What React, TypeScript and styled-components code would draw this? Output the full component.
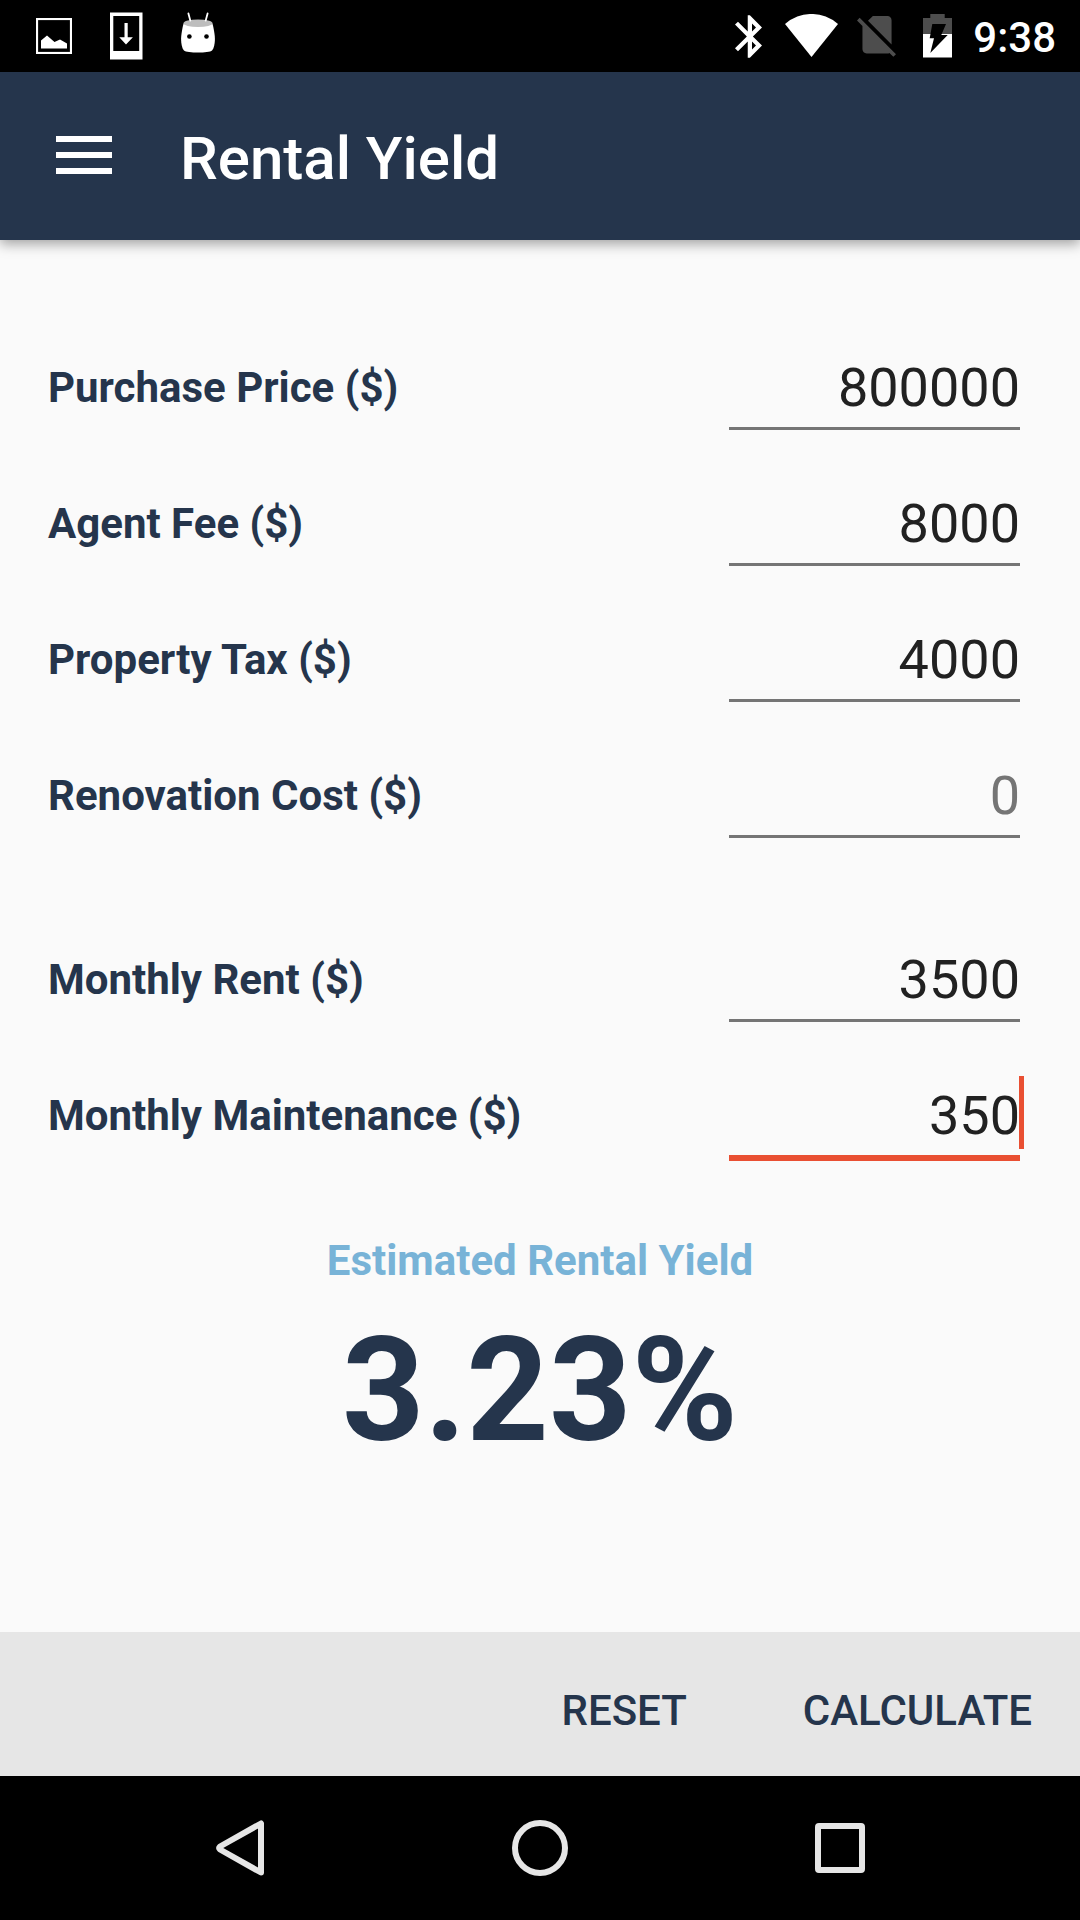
import React, { useState } from "react";
import styled, { createGlobalStyle } from "styled-components";

const navy = "#25354c";
const accent = "#e94f32";

const GlobalStyle = createGlobalStyle`
  *, *::before, *::after { box-sizing: border-box; }
  body {
    margin: 0;
    background: #fafafa;
    font-family: Roboto, "Noto Sans", sans-serif;
  }
  button, input { font-family: inherit; }
`;

const Screen = styled.div`
  display: flex;
  flex-direction: column;
  min-height: 100vh;
`;

const StatusBar = styled.div`
  display: flex;
  align-items: center;
  justify-content: space-between;
  height: 72px;
  padding: 0 24px 0 36px;
  background: #000;
  color: #fff;
`;

const Notifications = styled.div`
  display: flex;
  align-items: center;
  gap: 38px;
`;

const SystemStatus = styled.div`
  display: grid;
  grid-template-columns: repeat(4, 63px) auto;
  align-items: center;
  justify-items: center;
`;

const Clock = styled.time`
  padding: 4px 0 0 4px;
  font-size: 42px;
  font-weight: 500;
  line-height: 48px;
`;

const AppBar = styled.header`
  position: relative;
  display: flex;
  align-items: center;
  gap: 68px;
  height: 168px;
  padding: 0 56px 2px;
  background: ${navy};
  color: #fff;
  box-shadow: 0 4px 12px rgba(0, 0, 0, 0.36);
`;

const IconButton = styled.button`
  display: flex;
  align-items: center;
  justify-content: center;
  padding: 0;
  border: 0;
  background: none;
  color: inherit;
  cursor: pointer;
`;

const Title = styled.h1`
  margin: 0;
  padding-top: 8px;
  font-size: 60px;
  font-weight: 500;
  line-height: 72px;
`;

const Form = styled.form`
  display: flex;
  flex: 1;
  flex-direction: column;
`;

const Fields = styled.div`
  display: flex;
  flex-direction: column;
  gap: 100px;
  padding: 106px 60px 0 48px;
`;

const FieldGroup = styled.div`
  display: flex;
  flex-direction: column;
  gap: 52px;
`;

const FieldRow = styled.div`
  display: grid;
  grid-template-columns: minmax(0, 1fr) 291px;
  align-items: center;
`;

const FieldLabel = styled.label`
  color: ${navy};
  font-size: 42px;
  font-weight: 700;
  line-height: 48px;
`;

const InputBox = styled.div`
  position: relative;
`;

const NumberInput = styled.input<{ $active: boolean }>`
  display: block;
  width: 100%;
  height: 84px;
  padding: 1px 0 0;
  border: 0;
  border-bottom: 3px solid ${(p) => (p.$active ? accent : "#757575")};
  border-radius: 0;
  outline: 0;
  background: transparent;
  box-shadow: ${(p) => (p.$active ? `0 3px 0 ${accent}` : "none")};
  caret-color: transparent;
  color: #212121;
  font-size: 54px;
  line-height: 72px;
  text-align: right;

  &::placeholder {
    color: #757575;
    opacity: 1;
  }
`;

const Caret = styled.span`
  position: absolute;
  top: 2px;
  right: -4px;
  width: 5px;
  height: 73px;
  background: ${accent};
`;

const Result = styled.section`
  display: flex;
  flex: 1;
  flex-direction: column;
  align-items: center;
  gap: 22px;
  padding: 79px 48px 48px;
`;

const ResultLabel = styled.h2`
  margin: 0;
  color: #78b3d7;
  font-size: 42px;
  font-weight: 700;
  line-height: 48px;
`;

const ResultValue = styled.output`
  color: ${navy};
  font-size: 144px;
  font-weight: 700;
  line-height: 168px;
`;

const Actions = styled.div`
  display: flex;
  align-items: center;
  justify-content: flex-end;
  gap: 116px;
  height: 144px;
  padding: 14px 48px 0;
  background: #e6e6e6;
`;

const ActionButton = styled.button`
  padding: 0;
  border: 0;
  background: none;
  color: ${navy};
  font-size: 42px;
  font-weight: 500;
  line-height: 48px;
  text-transform: uppercase;
  cursor: pointer;
`;

const NavBar = styled.nav`
  display: grid;
  grid-template-columns: repeat(3, 300px);
  justify-content: center;
  height: 144px;
  background: #000;
  color: #e6e6e6;
`;

const PictureIcon = () => (
  <svg width="36" height="36" viewBox="0 0 36 36" aria-hidden="true">
    <rect x="1" y="1" width="34" height="34" fill="none" stroke="#fff" strokeWidth="2.2" />
    <path d="M5 30.5V22.5L11 17.5L18.5 24L24 21.5L31 25.5V30.5Z" fill="#fff" />
  </svg>
);

const DownloadIcon = () => (
  <svg width="33" height="48" viewBox="0 -1 33 48" aria-hidden="true">
    <path d="M0 -.4H32.5V46.6H0ZM3.3 3V38H29.2V3Z" fill="#fff" fillRule="evenodd" />
    <path d="M14.5 10h3.2v14.3h5.2L16 31.4L9.3 24.3h5.2Z" fill="#fff" />
  </svg>
);

const MarshmallowIcon = () => (
  <svg width="34" height="48" viewBox="0 0 34 48" aria-hidden="true">
    <path
      d="M2.6 11.5C1 17 .1 24 .1 27C.1 31 1 36.5 3 38.5C6 41.2 28 41.2 31 38.5C33 36.5 33.9 31 33.9 27C33.9 24 33 17 31.4 11.5Z"
      fill="#fff"
    />
    <ellipse cx="17" cy="11.2" rx="14.5" ry="3.8" fill="#bdbdbd" />
    <path d="M7.4 1.4L9.3 8.6M26.6 1.4L24.7 8.6" stroke="#fff" strokeWidth="1.8" strokeLinecap="round" />
    <circle cx="8.4" cy="24.5" r="2.3" fill="#000" />
    <circle cx="25.5" cy="24.5" r="2.3" fill="#000" />
  </svg>
);

const BluetoothIcon = () => (
  <svg width="27" height="44" viewBox="5 1.53 12.71 20.47" aria-hidden="true">
    <path
      fill="#fff"
      d="M17.71 7.71L12 2h-1v7.59L6.41 5 5 6.41 10.59 12 5 17.59 6.41 19 11 14.41V22h1l5.71-5.71-4.3-4.29 4.3-4.29zM13 5.83l1.88 1.88L13 9.59V5.83zm1.88 10.46L13 18.17v-3.76l1.88 1.88z"
    />
  </svg>
);

const WifiIcon = () => (
  <svg width="53" height="44" viewBox="0 0 53 44" aria-hidden="true">
    <path d="M26.5 43L0 10A40 40 0 0 1 53 10Z" fill="#fff" />
  </svg>
);

const NoSimIcon = () => (
  <svg width="43" height="44" viewBox="0.46 2.04 20.66 21.15" aria-hidden="true">
    <path
      fill="#4d4d4d"
      d="M18.99 5c0-1.1-.89-2-1.99-2h-7L7.66 5.34 19 16.68 18.99 5zM3.65 3.88L2.38 5.15 5 7.77V19c0 1.1.9 2 2 2h10.01c.35 0 .67-.1.96-.26l1.88 1.88 1.27-1.27L3.65 3.88z"
    />
  </svg>
);

const BatteryIcon = () => (
  <svg width="29" height="44" viewBox="0 0 29 44" aria-hidden="true">
    <path d="M7.3 0H21.7V4H29V20H0V4H7.3Z" fill="#4d4d4d" />
    <path d="M0 20H29V43.5H0Z" fill="#fff" />
    <path d="M9.3 10H23L18.3 21H24.7L7.3 39L11 24.3H6.7Z" fill="#000" />
  </svg>
);

const MenuIcon = () => (
  <svg width="56" height="38" viewBox="0 0 56 38" aria-hidden="true">
    <path d="M0 0H56V6H0ZM0 16H56V22H0ZM0 32H56V38H0Z" fill="currentColor" />
  </svg>
);

const BackIcon = () => (
  <svg width="48" height="56" viewBox="0 0 48 56" aria-hidden="true">
    <path
      fill="none"
      stroke="currentColor"
      strokeWidth="6"
      strokeLinejoin="round"
      d="M45 3.5V52.5L4 29.5Q2.5 28 4 26.5Z"
    />
  </svg>
);

const HomeIcon = () => (
  <svg width="56" height="56" viewBox="0 0 56 56" aria-hidden="true">
    <circle cx="28" cy="28" r="25" fill="none" stroke="currentColor" strokeWidth="6" />
  </svg>
);

const RecentsIcon = () => (
  <svg width="50" height="50" viewBox="0 0 50 50" aria-hidden="true">
    <path
      fill="currentColor"
      fillRule="evenodd"
      d="M4 0H46Q50 0 50 4V46Q50 50 46 50H4Q0 50 0 46V4Q0 0 4 0ZM6 6V44H44V6Z"
    />
  </svg>
);

type FieldKey = "price" | "agentFee" | "tax" | "renovation" | "rent" | "maintenance";
type Values = Record<FieldKey, string>;

const groups: { key: FieldKey; label: string }[][] = [
  [
    { key: "price", label: "Purchase Price ($)" },
    { key: "agentFee", label: "Agent Fee ($)" },
    { key: "tax", label: "Property Tax ($)" },
    { key: "renovation", label: "Renovation Cost ($)" },
  ],
  [
    { key: "rent", label: "Monthly Rent ($)" },
    { key: "maintenance", label: "Monthly Maintenance ($)" },
  ],
];

const initialValues: Values = {
  price: "800000",
  agentFee: "8000",
  tax: "4000",
  renovation: "",
  rent: "3500",
  maintenance: "350",
};

const emptyValues: Values = {
  price: "",
  agentFee: "",
  tax: "",
  renovation: "",
  rent: "",
  maintenance: "",
};

// Net income of the first year as a share of the purchase price.
function rentalYield(v: Values): number {
  const n = (key: FieldKey) => Number(v[key]) || 0;
  if (n("price") === 0) return 0;
  const income = (n("rent") - n("maintenance")) * 12;
  const costs = n("agentFee") + n("tax") + n("renovation");
  return Math.round(((income - costs) * 10000) / n("price")) / 100;
}

export default function App() {
  const [values, setValues] = useState<Values>(initialValues);
  const [active, setActive] = useState<FieldKey>("maintenance");
  const [result, setResult] = useState(rentalYield(initialValues));

  const submit = (event: React.FormEvent) => {
    event.preventDefault();
    setResult(rentalYield(values));
  };

  const reset = () => {
    setValues(emptyValues);
    setResult(0);
  };

  return (
    <Screen>
      <GlobalStyle />
      <StatusBar>
        <Notifications>
          <PictureIcon />
          <DownloadIcon />
          <MarshmallowIcon />
        </Notifications>
        <SystemStatus>
          <BluetoothIcon />
          <WifiIcon />
          <NoSimIcon />
          <BatteryIcon />
          <Clock>9:38</Clock>
        </SystemStatus>
      </StatusBar>

      <AppBar>
        <IconButton type="button" aria-label="Open menu">
          <MenuIcon />
        </IconButton>
        <Title>Rental Yield</Title>
      </AppBar>

      <Form onSubmit={submit}>
        <Fields>
          {groups.map((group, index) => (
            <FieldGroup key={index}>
              {group.map(({ key, label }) => (
                <FieldRow key={key}>
                  <FieldLabel htmlFor={key}>{label}</FieldLabel>
                  <InputBox>
                    <NumberInput
                      id={key}
                      type="text"
                      inputMode="numeric"
                      placeholder="0"
                      value={values[key]}
                      $active={active === key}
                      onFocus={() => setActive(key)}
                      onChange={(e) => setValues({ ...values, [key]: e.target.value })}
                    />
                    {active === key && <Caret />}
                  </InputBox>
                </FieldRow>
              ))}
            </FieldGroup>
          ))}
        </Fields>

        <Result>
          <ResultLabel>Estimated Rental Yield</ResultLabel>
          <ResultValue>{result.toFixed(2)}%</ResultValue>
        </Result>

        <Actions>
          <ActionButton type="button" onClick={reset}>
            Reset
          </ActionButton>
          <ActionButton type="submit">Calculate</ActionButton>
        </Actions>
      </Form>

      <NavBar aria-label="System navigation">
        <IconButton type="button" aria-label="Back">
          <BackIcon />
        </IconButton>
        <IconButton type="button" aria-label="Home">
          <HomeIcon />
        </IconButton>
        <IconButton type="button" aria-label="Recent apps">
          <RecentsIcon />
        </IconButton>
      </NavBar>
    </Screen>
  );
}
